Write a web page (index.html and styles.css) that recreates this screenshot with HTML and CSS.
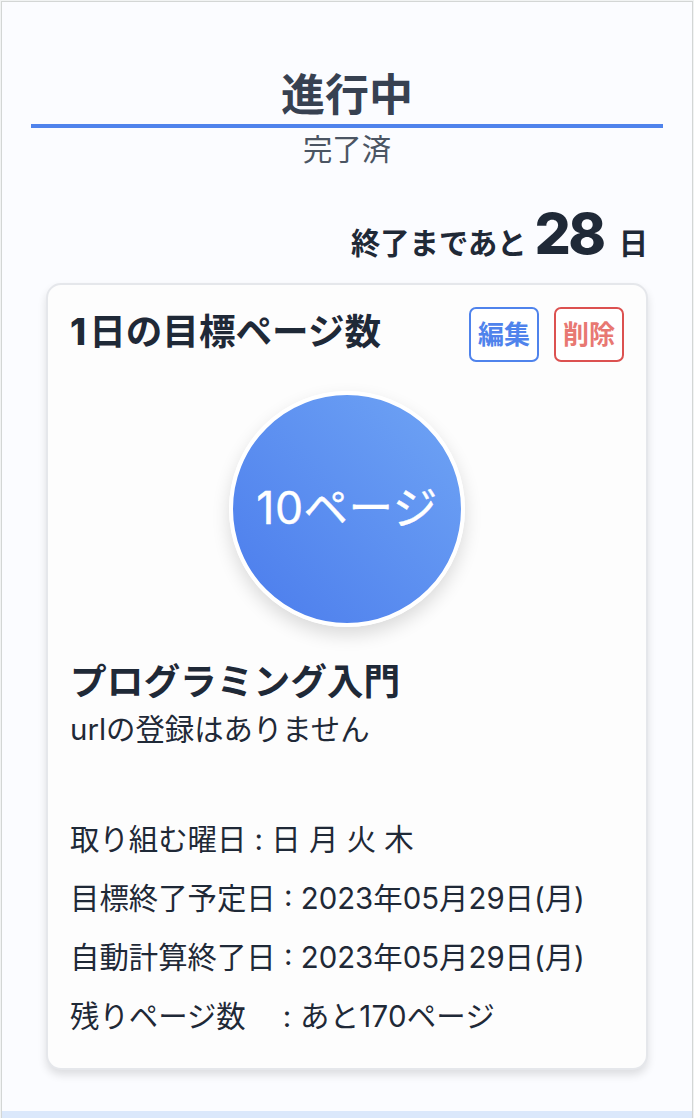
FILE: index.html
```html
<!DOCTYPE html>
<html lang="ja">
<head>
<meta charset="utf-8">
<title>進行中</title>
<link rel="stylesheet" href="styles.css">
</head>
<body>
<div class="page">
<main class="screen">
  <nav class="tabs">
    <a class="tab tab-active">進行中</a>
    <a class="tab">完了済</a>
  </nav>
  <p class="remaining"><span class="remaining-label">終了まであと</span><span class="remaining-count">28</span><span class="remaining-unit">日</span></p>
  <section class="card">
    <header class="card-head">
      <h2 class="card-title"><span class="card-title-number">1</span>日の目標ページ数</h2>
      <div class="actions">
        <button class="btn btn-edit">編集</button>
        <button class="btn btn-delete">削除</button>
      </div>
    </header>
    <div class="circle"><span class="circle-text">10ページ</span></div>
    <h3 class="book">プログラミング入門</h3>
    <p class="url">urlの登録はありません</p>
    <ul class="details">
      <li>取り組む曜日 : 日 月 火 木</li>
      <li>目標終了予定日 : 2023年05月29日(月)</li>
      <li>自動計算終了日 : 2023年05月29日(月)</li>
      <li><span>残りページ数</span><span class="left-value">: あと170ページ</span></li>
    </ul>
  </section>
</main>
<footer class="footer"></footer>
</div>
</body>
</html>
```
FILE: styles.css
```css
* { box-sizing: border-box; margin: 0; padding: 0; }
body { font-family: Inter, "Noto Sans CJK JP", sans-serif; color: #1f2937; background: #f1f3f3; padding: 1px 1px 0; }
.page { height: 1117px; background: #fbfcff; border: 1px solid #d3d6d5; border-bottom: 0; display: flex; flex-direction: column; overflow: hidden; }
.screen { flex: 1; padding: 58px 29px 0; }
.tabs { display: flex; flex-direction: column; text-align: center; }
.tab { height: 42px; line-height: 43px; font-size: 29.4px; color: #4b5563; }
.tab-active { height: 68px; line-height: 70px; border-bottom: 4px solid #4f83ec; font-size: 44px; font-weight: 700; color: #374151; }
.remaining { height: 77px; margin-top: 32px; margin-bottom: 4px; padding-right: 15px; display: flex; justify-content: flex-end; align-items: baseline; font-weight: 700; line-height: 64px; white-space: nowrap; }
.remaining-label, .remaining-unit { font-size: 29.3px; }
.remaining-count { font-size: 57px; font-weight: 800; letter-spacing: -2.5px; margin: 0 15px 0 8px; }
.card { height: 787px; margin: 0 15px; border: 2px solid #e5e7eb; border-radius: 15px; background: #fdfdfd; padding: 22px; box-shadow: 0 5px 9px rgba(0,0,0,.12); }
.card-head { display: flex; justify-content: space-between; height: 84px; }
.card-title { font-size: 36.6px; line-height: 50px; white-space: nowrap; }
.card-title-number { font-weight: 800; letter-spacing: 3px; }
.actions { display: flex; gap: 15px; }
.btn { width: 70px; height: 55px; border: 2px solid; border-radius: 7px; background: #fff; font: 700 26px/50px Inter, "Noto Sans CJK JP", sans-serif; }
.btn-edit { color: #4f83ec; }
.btn-delete { color: #e87872; border-color: #dc5150; }
.circle { width: 236px; height: 236px; margin: 0 auto; border: 4px solid #fff; border-radius: 50%; background: linear-gradient(45deg, #4a7bec, #70a5f5) border-box; color: #fff; font-size: 44.5px; display: flex; align-items: center; justify-content: center; box-shadow: 0 8px 18px rgba(0,0,0,.14); }
.circle-text { padding-bottom: 9px; letter-spacing: .5px; -webkit-text-stroke: .4px #fff; }
.book { margin-top: 29px; font-size: 36.7px; line-height: 52px; }
.url { font-size: 29.4px; line-height: 43px; }
.details { list-style: none; margin-top: 59px; }
.details li { height: 59px; line-height: 59px; font-size: 29.4px; display: flex; white-space: pre; }
.left-value { margin-left: 37px; letter-spacing: .25px; }
.footer { height: 7px; background: #dbe8fb; }
```
